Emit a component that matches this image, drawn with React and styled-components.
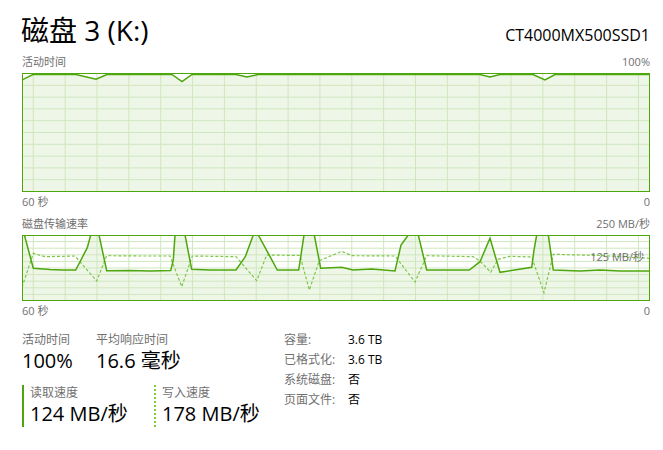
import React from "react";
import styled, { createGlobalStyle } from "styled-components";

const GREEN = "#4da60c";
const LIGHT = "#80c64a";
const FILL = "#eef6e8";
const GRID = "#cfe7bf";

const GlobalStyle = createGlobalStyle`
  body {
    margin: 0;
    background: #fff;
    font-family: "Open Sans", "Noto Sans CJK SC", sans-serif;
    color: #000;
  }
`;

// page coords, the svg viewBox is set to the chart's place on the page
const activity = [
  [22, 80], [33, 74.5], [76, 74.5], [96, 79.3], [107, 74.5], [172, 74.5],
  [182, 81.7], [192, 74.5], [236, 74.5], [247, 77], [258, 74.5], [480, 74.5],
  [490, 77], [500, 74.5], [533, 74.5], [545, 80], [555, 74.5], [649, 74.5],
];

const read = [
  [22, 226], [33.3, 268.3], [50, 269.5], [62, 270], [75.7, 270], [87.3, 247.7],
  [90.7, 235], [99, 235], [106.7, 270.7], [130, 270.5], [150, 271], [170.7, 270.5],
  [173.3, 260], [175, 235], [185, 235], [191.7, 269.3], [210, 270], [236, 270],
  [245.3, 256.7], [253.3, 235], [258.3, 235], [277.3, 270], [298.7, 270], [304, 235],
  [314.3, 235], [320.7, 268.3], [341.7, 267.3], [353, 270], [371.7, 269], [395, 271],
  [401, 245], [408.3, 235], [418.3, 235], [426.7, 270], [469.3, 270], [480, 261.7],
  [490, 238.3], [500, 272.3], [531.7, 267.3], [534, 250], [536.7, 235], [548.3, 235],
  [553.3, 270], [580, 271], [600, 270], [620, 271], [649, 271],
];

const write = [
  [22, 287.3], [33.3, 253.3], [45, 256.7], [75, 256], [96.7, 281], [106.7, 255.7],
  [140, 256], [170, 256], [181.7, 286.7], [192.3, 256], [236, 256.7], [256.7, 280.7],
  [266.7, 255], [300, 255.5], [309.3, 290], [319.3, 260.7], [341.7, 251.3],
  [351.7, 255.7], [395, 256], [415, 282], [426.7, 255.7], [473, 256.7], [480, 261],
  [490.7, 272.3], [498, 259.3], [510, 256.3], [531.7, 257], [544, 292.7],
  [553.3, 254.3], [600, 255.5], [649, 258.3],
];

const line = (pts) => "M" + pts.map((p) => p.join(",")).join(" L");
const area = (pts, bottom) =>
  `M${pts[0][0]},${bottom} L` +
  pts.map((p) => p.join(",")).join(" L") +
  ` L${pts[pts.length - 1][0]},${bottom} Z`;

const Grid = ({ top, bottom }) => {
  const cols = [];
  for (let x = 33.3; x < 649; x += 31.85) cols.push(x);
  const rows = [];
  for (let i = 1; i < 10; i++) rows.push(top + ((bottom - top) * i) / 10);
  return (
    <g stroke={GRID} strokeWidth="1">
      {cols.map((x) => (
        <line key={"c" + x} x1={x} x2={x} y1={top} y2={bottom} />
      ))}
      {rows.map((y) => (
        <line key={"r" + y} x1={22} x2={650} y1={y} y2={y} />
      ))}
    </g>
  );
};

const App = () => (
  <Page>
    <GlobalStyle />
    <Header>
      <Title>磁盘 3 (K:)</Title>
      <Model>CT4000MX500SSD1</Model>
    </Header>

    <AxisRow $top={7}>
      <span>活动时间</span>
      <span>100%</span>
    </AxisRow>
    <Chart $height={119}>
      <svg width="626" height="117" viewBox="23 74 626 117">
        <path d={area(activity, 191)} fill={FILL} />
        <Grid top={73.5} bottom={191.5} />
        <path d={line(activity)} fill="none" stroke={GREEN} strokeWidth="1.5" />
      </svg>
    </Chart>
    <AxisRow $top={3}>
      <span>60 秒</span>
      <span>0</span>
    </AxisRow>

    <AxisRow $top={8}>
      <span>磁盘传输速率</span>
      <span>250 MB/秒</span>
    </AxisRow>
    <Chart $height={66}>
      <svg width="626" height="64" viewBox="23 236 626 64">
        <path d={area(read, 301)} fill={FILL} />
        <Grid top={235} bottom={301} />
        <path
          d={line(write)}
          fill="none"
          stroke={LIGHT}
          strokeWidth="1.2"
          strokeDasharray="3 2"
        />
        <path d={line(read)} fill="none" stroke={GREEN} strokeWidth="1.5" />
      </svg>
      <MidMark>125 MB/秒</MidMark>
    </Chart>
    <AxisRow $top={3}>
      <span>60 秒</span>
      <span>0</span>
    </AxisRow>

    <Details>
      <Stats>
        <TopStats>
          <Stat>
            <StatLabel>活动时间</StatLabel>
            <StatValue>100%</StatValue>
          </Stat>
          <Stat>
            <StatLabel>平均响应时间</StatLabel>
            <StatValue>16.6 毫秒</StatValue>
          </Stat>
        </TopStats>
        <RateRow>
          <Rate $kind="read">
            <StatLabel>读取速度</StatLabel>
            <StatValue>124 MB/秒</StatValue>
          </Rate>
          <Rate $kind="write">
            <StatLabel>写入速度</StatLabel>
            <StatValue>178 MB/秒</StatValue>
          </Rate>
        </RateRow>
      </Stats>
      <Props>
        <PropLabel>容量:</PropLabel>
        <PropValue>3.6 TB</PropValue>
        <PropLabel>已格式化:</PropLabel>
        <PropValue>3.6 TB</PropValue>
        <PropLabel>系统磁盘:</PropLabel>
        <PropValue>否</PropValue>
        <PropLabel>页面文件:</PropLabel>
        <PropValue>否</PropValue>
      </Props>
    </Details>
  </Page>
);

export default App;

const Page = styled.div`
  width: 663px;
  height: 450px;
  box-sizing: border-box;
  padding: 0 13px 0 22px;
  overflow: hidden;
`;

const Header = styled.div`
  display: flex;
  justify-content: space-between;
  align-items: baseline;
  padding-top: 13px;
  height: 35px;
`;

const Title = styled.div`
  font-size: 28px;
  line-height: 34px;
  margin-left: -1px;
`;

const Model = styled.div`
  font-size: 16px;
  line-height: 20px;
`;

const AxisRow = styled.div`
  display: flex;
  justify-content: space-between;
  margin-top: ${(p) => p.$top}px;
  margin-bottom: 4px;
  font-size: 11px;
  line-height: 14px;
  color: #707070;
`;

const Chart = styled.div`
  position: relative;
  height: ${(p) => p.$height}px;
  box-sizing: border-box;
  border: 1px solid ${GREEN};
  svg {
    display: block;
  }
`;

const MidMark = styled.span`
  position: absolute;
  right: 5px;
  top: 14px;
  font-size: 11px;
  line-height: 14px;
  color: #707070;
`;

const Details = styled.div`
  display: flex;
  align-items: flex-start;
  margin-top: 14px;
`;

const Stats = styled.div`
  width: 262px;
`;

const TopStats = styled.div`
  display: grid;
  grid-template-columns: 74px auto;
`;

const Stat = styled.div``;

const StatLabel = styled.div`
  font-size: 12px;
  line-height: 16px;
  color: #707070;
`;

const StatValue = styled.div`
  font-size: 20px;
  line-height: 26px;
`;

const RateRow = styled.div`
  display: flex;
  margin-top: 11px;
`;

const Rate = styled.div`
  width: ${(p) => (p.$kind === "read" ? "132px" : "auto")};
  box-sizing: border-box;
  padding-left: 6px;
  border-left: 2px ${(p) => (p.$kind === "read" ? "solid" : "dotted")}
    ${(p) => (p.$kind === "read" ? GREEN : "#7ccc2e")};
`;

const Props = styled.div`
  display: grid;
  grid-template-columns: 64px auto;
  align-content: start;
  row-gap: 4px;
  font-size: 12px;
  line-height: 16px;
`;

const PropLabel = styled.div`
  color: #707070;
`;

const PropValue = styled.div``;
